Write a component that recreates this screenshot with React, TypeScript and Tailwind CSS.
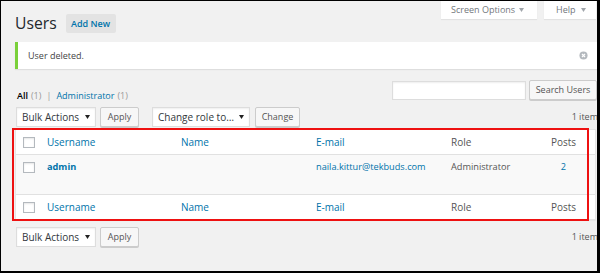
import React from "react";

const Caret = ({ className }: { className?: string }) => (
  <svg width="5" height="4" viewBox="0 0 5 4" className={className}>
    <path d="M0 0h5L2.5 4z" fill="currentColor" />
  </svg>
);

const Select = ({ label, className }: { label: string; className: string }) => (
  <div
    className={`flex h-[20px] items-center justify-between border border-[#ddd] bg-white pl-[5px] pr-[5px] text-[10px] text-[#32373c] shadow-[inset_0_1px_2px_rgba(0,0,0,0.07)] ${className}`}
  >
    <span>{label}</span>
    <Caret className="text-[#222]" />
  </div>
);

const Button = ({ label, className }: { label: string; className: string }) => (
  <div
    className={`flex h-[20px] items-center justify-center rounded-[2px] border border-[#ccc] bg-[#f7f7f7] text-[9px] text-[#555] shadow-[0_1px_0_#ccc] ${className}`}
  >
    {label}
  </div>
);

const Checkbox = () => (
  <div className="h-[11px] w-[12px] border border-[#b4b9be] bg-white shadow-[inset_0_1px_2px_rgba(0,0,0,0.1)]" />
);

const cols = "grid grid-cols-[23px_134px_135px_135px_89px_63px]";

const HeadRow = ({ border }: { border: string }) => (
  <div className={`${cols} h-[25px] items-center bg-white text-[10px] ${border}`}>
    <div className="pl-[7px]">
      <Checkbox />
    </div>
    <span className="pl-[8px] text-[#0073aa]">Username</span>
    <span className="pl-[8px] text-[#0073aa]">Name</span>
    <span className="pl-[8px] text-[#0073aa]">E-mail</span>
    <span className="pl-[8px] text-[#555]">Role</span>
    <span className="text-center text-[#555]">Posts</span>
  </div>
);

export default function App() {
  return (
    <div className="relative h-[273px] w-[600px] overflow-hidden bg-[#f1f1f1] font-['Open_Sans',sans-serif] text-[#444]">
      <div className="pl-[15px]">
        {/* heading + screen meta tabs */}
        <div className="flex items-start justify-between">
          <div className="mt-[14px] flex h-[19px] items-center">
            <h1 className="text-[15.7px] leading-[19px] font-normal text-[#23282d]">Users</h1>
            <div className="ml-[9px] flex h-[19px] w-[50px] items-center justify-center rounded-[2px] bg-[#e3e3e3] text-[9px] font-semibold text-[#0073aa]">
              Add New
            </div>
          </div>
          <div className="mr-[4px] flex gap-[7px]">
            <div className="flex h-[19px] w-[96px] items-center gap-[4px] bg-white pl-[10px] text-[9px] text-[#72777c] shadow-[0_1px_1px_rgba(0,0,0,0.06)]">
              Screen Options <Caret className="text-[#a0a5aa]" />
            </div>
            <div className="flex h-[19px] w-[52px] items-center gap-[6px] bg-white pl-[12px] text-[9px] text-[#72777c] shadow-[0_1px_1px_rgba(0,0,0,0.06)]">
              Help <Caret className="text-[#a0a5aa]" />
            </div>
          </div>
        </div>

        {/* notice */}
        <div className="mt-[9px] flex h-[27px] items-center justify-between border-l-[3px] border-[#7ad03a] bg-white pl-[10px] pr-[12px] text-[9px] text-[#444] shadow-[0_1px_1px_rgba(0,0,0,0.08)]">
          <span>User deleted.</span>
          <svg width="9" height="9" viewBox="0 0 10 10">
            <circle cx="5" cy="5" r="4.5" fill="#b4b9be" />
            <path d="M3.3 3.3l3.4 3.4M6.7 3.3L3.3 6.7" stroke="#fff" strokeWidth="1.3" />
          </svg>
        </div>

        {/* views + search */}
        <div className="mt-[11px] flex h-[20px] items-start justify-between">
          <div className="mt-[10px] ml-[2px] flex items-center gap-[3px] text-[9px] leading-[12px]">
            <span className="font-semibold text-[#000]">All</span>
            <span className="text-[#999]">(1)</span>
            <span className="mx-[2px] text-[#999]">|</span>
            <span className="text-[#0073aa]">Administrator</span>
            <span className="text-[#999]">(1)</span>
          </div>
          <div className="mr-[3px] flex items-center">
            <div className="h-[19px] w-[134px] border border-[#ddd] bg-white shadow-[inset_0_1px_2px_rgba(0,0,0,0.07)]" />
            <Button label="Search Users" className="ml-[3px] w-[68px]" />
          </div>
        </div>

        {/* top tablenav */}
        <div className="mt-[7px] flex items-center">
          <Select label="Bulk Actions" className="ml-[1px] w-[80px]" />
          <Button label="Apply" className="ml-[4px] w-[39px]" />
          <Select label="Change role to…" className="ml-[13px] w-[98px]" />
          <Button label="Change" className="ml-[5px] w-[45px]" />
          <span className="ml-auto mr-[2px] text-[9px] text-[#555]">1 item</span>
        </div>

        {/* table */}
        <div className="mt-[2px] w-[581px] border border-[#e5e5e5] bg-white shadow-[0_1px_1px_rgba(0,0,0,0.04)]">
          <HeadRow border="border-b border-[#e1e1e1]" />
          <div className={`${cols} h-[39px] items-start bg-[#f9f9f9] pt-[5px] text-[9.2px]`}>
            <div className="pt-[2px] pl-[7px]">
              <Checkbox />
            </div>
            <span className="pl-[8px] font-bold text-[#0073aa]">admin</span>
            <span className="pl-[8px]" />
            <span className="pl-[8px] text-[#0073aa]">naila.kittur@tekbuds.com</span>
            <span className="pl-[8px] text-[#555]">Administrator</span>
            <span className="text-center text-[#0073aa]">2</span>
          </div>
          <HeadRow border="border-t border-[#e1e1e1]" />
        </div>

        {/* bottom tablenav */}
        <div className="mt-[7px] flex items-center">
          <Select label="Bulk Actions" className="ml-[1px] w-[80px]" />
          <Button label="Apply" className="ml-[4px] w-[39px]" />
          <span className="ml-auto mr-[2px] text-[9px] text-[#555]">1 item</span>
        </div>
      </div>

      {/* red annotation box */}
      <div className="pointer-events-none absolute top-[128px] left-[12px] h-[93px] w-[577px] border-2 border-[#ee1111]" />

      {/* screenshot frame */}
      <div className="pointer-events-none absolute inset-0 border-t border-r-[3px] border-b-2 border-l border-black" />
    </div>
  );
}
